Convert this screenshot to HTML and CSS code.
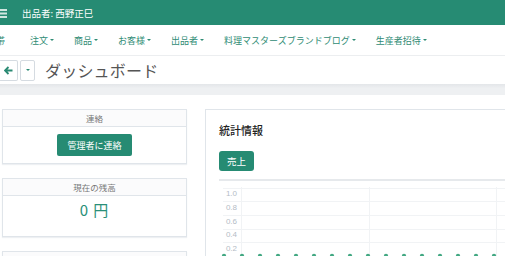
FILE: index.html
```html
<!DOCTYPE html>
<html lang="ja">
<head>
  <meta charset="UTF-8">
  <meta name="viewport" content="width=device-width, initial-scale=1.0">
  <title>ダッシュボード</title>
  <link rel="stylesheet" href="styles.css">
</head>
<body>
  <header class="topbar">
    <svg class="menu-icon" width="12" height="10" viewBox="0 0 12 10">
      <rect x="0" y="1" width="12" height="2" fill="#cfe6df"/>
      <rect x="0" y="4.5" width="12" height="2" fill="#cfe6df"/>
      <rect x="0" y="8" width="12" height="2" fill="#cfe6df"/>
    </svg>
    <span class="seller">出品者: 西野正巳</span>
  </header>

  <!-- Main menu -->
  <nav class="menu">
    <a class="menu-item cut">帯</a>
    <a class="menu-item">注文 <span class="caret"></span></a>
    <a class="menu-item">商品 <span class="caret"></span></a>
    <a class="menu-item">お客様 <span class="caret"></span></a>
    <a class="menu-item">出品者 <span class="caret"></span></a>
    <a class="menu-item">料理マスターズブランドブログ <span class="caret"></span></a>
    <a class="menu-item">生産者招待 <span class="caret"></span></a>
  </nav>

  <div class="titlebar">
    <button class="btn-back">
      <svg width="9" height="9" viewBox="0 0 9 9">
        <path d="M4.5 1 L1 4.5 L4.5 8 M1 4.5 H8.5" stroke="#2a8a73" stroke-width="1.8" fill="none"/>
      </svg>
    </button>
    <button class="btn-drop"><span class="caret"></span></button>
    <h1>ダッシュボード</h1>
  </div>
  <div class="shade"></div>

  <main class="content">
    <aside class="side">
      <section class="card">
        <div class="card-head">連絡</div>
        <div class="card-body">
          <button class="btn-green">管理者に連絡</button>
        </div>
      </section>
      <section class="card">
        <div class="card-head">現在の残高</div>
        <div class="card-body balance">0 円</div>
      </section>
      <section class="card">
        <div class="card-head">指定期間中の総計</div>
        <div class="card-body"></div>
      </section>
    </aside>

    <section class="panel">
      <h2>統計情報</h2>
      <button class="btn-green btn-tab">売上</button>
      <div class="chart">
        <svg width="300" height="80" viewBox="0 0 300 80">
          <g stroke="#f1f3f5" stroke-width="1">
            <line x1="4" y1="7.5" x2="300" y2="7.5"/>
            <line x1="4" y1="20.5" x2="300" y2="20.5"/>
            <line x1="4" y1="34.5" x2="300" y2="34.5"/>
            <line x1="4" y1="48.5" x2="300" y2="48.5"/>
            <line x1="4" y1="61.5" x2="300" y2="61.5"/>
            <line x1="22.5" y1="6" x2="22.5" y2="80"/>
            <line x1="150.5" y1="6" x2="150.5" y2="80"/>
            <line x1="277.5" y1="6" x2="277.5" y2="80"/>
          </g>
          <g class="axis" fill="#b4bcc6" font-size="8" text-anchor="end">
            <text x="18" y="15">1.0</text>
            <text x="18" y="29">0.8</text>
            <text x="18" y="43">0.6</text>
            <text x="18" y="56">0.4</text>
            <text x="18" y="70">0.2</text>
          </g>
          <g fill="#43a883">
            <circle cx="5" cy="75" r="2.2"/>
            <circle cx="23" cy="75" r="2.2"/>
            <circle cx="41" cy="75" r="2.2"/>
            <circle cx="59" cy="75" r="2.2"/>
            <circle cx="77" cy="75" r="2.2"/>
            <circle cx="95" cy="75" r="2.2"/>
            <circle cx="113" cy="75" r="2.2"/>
            <circle cx="131" cy="75" r="2.2"/>
            <circle cx="149" cy="75" r="2.2"/>
            <circle cx="167" cy="75" r="2.2"/>
            <circle cx="185" cy="75" r="2.2"/>
            <circle cx="203" cy="75" r="2.2"/>
            <circle cx="221" cy="75" r="2.2"/>
            <circle cx="239" cy="75" r="2.2"/>
            <circle cx="257" cy="75" r="2.2"/>
            <circle cx="275" cy="75" r="2.2"/>
            <circle cx="293" cy="75" r="2.2"/>
          </g>
        </svg>
      </div>
    </section>
  </main>
</body>
</html>
```

FILE: styles.css
```css
body {
  margin: 0;
  width: 505px;
  height: 256px;
  overflow: hidden;
  font-family: "Noto Sans CJK JP", "Noto Sans", sans-serif;
  background-color: #fff;
  color: #333;
}
.topbar {
  height: 25px;
  background-color: #268b73;
  display: flex;
  align-items: center;
}
.menu-icon {
  margin-left: -5px;
}
.seller {
  margin-left: 15px;
  color: #fff;
  font-size: 9.5px;
}
.menu {
  height: 30px;
  display: flex;
  align-items: center;
  border-bottom: 1px solid #eceef0;
  white-space: nowrap;
}
.menu-item {
  color: #2f8c75;
  font-size: 9px;
  padding: 0 10px;
  display: flex;
  align-items: center;
}
.menu-item.cut {
  margin-left: -14px;
  padding-right: 15px;
}
.caret {
  display: inline-block;
  width: 0;
  height: 0;
  margin-left: 2px;
  border-left: 2px solid transparent;
  border-right: 2px solid transparent;
  border-top: 2px solid currentColor;
}
.titlebar {
  height: 28px;
  display: flex;
  align-items: center;
}
.btn-back,
.btn-drop {
  height: 21px;
  background: #fff;
  border: 1px solid #d5dbe1;
  border-radius: 2px;
  padding: 0;
  display: flex;
  align-items: center;
  justify-content: center;
  color: #2a8a73;
}
.btn-back {
  width: 19px;
  margin-left: -1px;
  border-left: none;
}
.btn-drop {
  width: 15px;
  margin-left: 2px;
}
.btn-drop .caret {
  margin-left: 0;
}
.titlebar h1 {
  margin: 0 0 0 10px;
  font-size: 16px;
  font-weight: 400;
  color: #555;
  letter-spacing: 0.2px;
}
.shade {
  height: 11px;
  background: linear-gradient(#e3e6e9, #eef0f2 40%, #eef0f2);
}
.content {
  display: flex;
  align-items: flex-start;
  padding: 14px 0 0 2px;
  gap: 18px;
}
.side {
  width: 185px;
  display: flex;
  flex-direction: column;
  gap: 14px;
  flex-shrink: 0;
}
.card {
  border: 1px solid #e0e5ea;
  box-shadow: 0 1px 1px #eef0f3;
}
.card-head {
  height: 16px;
  line-height: 16px;
  background-color: #fbfbfc;
  border-bottom: 1px solid #e0e5ea;
  text-align: center;
  font-size: 8.5px;
  color: #777;
}
.card-body {
  display: flex;
  justify-content: center;
  padding: 7px 0 7px;
  min-height: 22px;
}
.btn-green {
  background-color: #268b73;
  color: #fff;
  border: none;
  border-radius: 2px;
  font-family: "Noto Sans CJK JP", sans-serif;
  font-size: 9px;
  height: 22px;
  padding: 0 10px;
}
.balance {
  color: #2a8f78;
  font-size: 15px;
  line-height: 22px;
  padding: 3px 0 15px;
  letter-spacing: 1px;
}
.panel {
  flex: 1;
  height: 200px;
  border: 1px solid #e0e5ea;
  border-right: none;
  padding: 0 0 0 13px;
}
.panel h2 {
  margin: 12px 0 0;
  font-size: 11px;
  font-weight: 500;
  color: #222;
}
.btn-tab {
  margin-top: 13px;
  height: 20px;
  padding: 0 8px;
  border-radius: 3px;
  font-size: 9.5px;
}
.chart {
  margin-top: 8px;
  border-top: 2px solid #e6e9ec;
}
.chart svg {
  display: block;
}
.axis {
  font-family: "Liberation Sans", sans-serif;
}
```
